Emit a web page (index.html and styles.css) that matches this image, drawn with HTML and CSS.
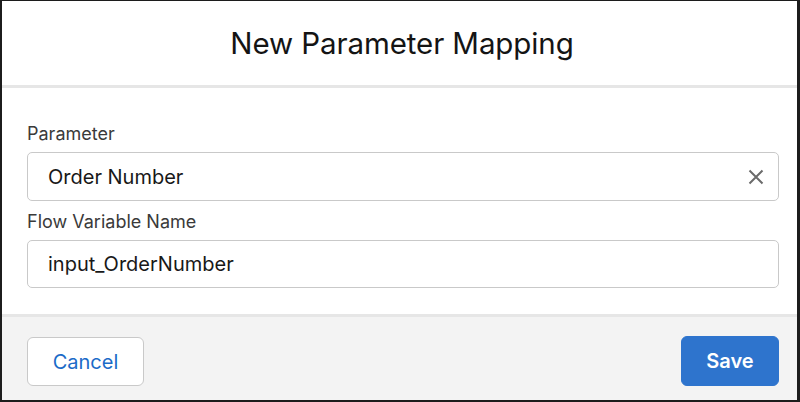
FILE: index.html
```html
<!DOCTYPE html>
<html lang="en">
<head>
    <meta charset="UTF-8">
    <meta name="viewport" content="width=device-width, initial-scale=1.0">
    <title>New Parameter Mapping</title>
    <link rel="stylesheet" href="styles.css">
</head>
<body>
    <div class="modal">
        <header class="modal-header">
            <h1 class="modal-title">New Parameter Mapping</h1>
        </header>

        <div class="modal-body">
            <label class="field-label" for="parameter">Parameter</label>
            <div class="field-input field-input--clearable">
                <span class="field-value">Order Number</span>
                <button class="clear-button" type="button" aria-label="Clear">
                    <svg viewBox="0 0 16 16" width="16" height="16">
                        <path d="M1.5 1.5 L14.5 14.5 M14.5 1.5 L1.5 14.5" stroke="#6b6b6b" stroke-width="2" fill="none"/>
                    </svg>
                </button>
            </div>

            <label class="field-label field-label--spaced" for="flowVar">Flow Variable Name</label>
            <div class="field-input">
                <span class="field-value">input_OrderNumber</span>
            </div>
        </div>

        <footer class="modal-footer">
            <button class="button button--neutral" type="button">Cancel</button>
            <button class="button button--brand" type="button">Save</button>
        </footer>
    </div>
</body>
</html>
```

FILE: styles.css
```css
:root {
    --clr-brand: #2e74cd;
    --clr-link: #1b6bc8;
    --clr-text: #181818;
    --clr-label: #3a3a3a;
    --clr-border: #c9c9c9;
    --clr-divider: #e6e6e6;
    --clr-footer: #f3f3f3;
    --font-family: Inter, 'Noto Sans', sans-serif;
}

* {
    margin: 0;
    padding: 0;
    box-sizing: border-box;
}

html, body {
    width: 800px;
    height: 402px;
    overflow: hidden;
}

body {
    font-family: var(--font-family);
    color: var(--clr-text);
    background: #ffffff;
}

.modal {
    height: 402px;
    display: flex;
    flex-direction: column;
    border-style: solid;
    border-color: #1c1c1c;
    border-width: 1px 3px 2px 2px;
}

.modal-header {
    height: 87px;
    flex-shrink: 0;
    display: flex;
    align-items: center;
    justify-content: center;
    border-bottom: 3px solid var(--clr-divider);
    padding-left: 5px;
}

.modal-title {
    font-size: 29.5px;
    font-weight: 400;
    letter-spacing: -0.1px;
    color: #141414;
}

.modal-body {
    flex: 1;
    display: flex;
    flex-direction: column;
    padding: 34px 18px 0 25px;
}

.field-label {
    font-size: 18px;
    line-height: 24px;
    color: var(--clr-label);
    margin-bottom: 6px;
}

.field-label--spaced {
    margin-top: 9px;
}

.field-input {
    height: 49px;
    display: flex;
    align-items: center;
    border: 1px solid var(--clr-border);
    border-radius: 5px;
    padding: 0 14px 0 20px;
}

.field-input + .field-label + .field-input {
    height: 48px;
}

.field-value {
    flex: 1;
    font-size: 20px;
    color: var(--clr-text);
}

.clear-button {
    display: flex;
    align-items: center;
    background: none;
    border: none;
    cursor: pointer;
}

.modal-footer {
    height: 86px;
    flex-shrink: 0;
    display: flex;
    justify-content: space-between;
    align-items: flex-start;
    padding: 20px 18px 0 25px;
    background: var(--clr-footer);
    border-top: 3px solid var(--clr-divider);
}

.button {
    height: 49px;
    border-radius: 6px;
    font-family: inherit;
    font-size: 20px;
    cursor: pointer;
}

.button--neutral {
    width: 117px;
    background: #ffffff;
    color: var(--clr-link);
    border: 1px solid var(--clr-border);
}

.button--brand {
    width: 98px;
    height: 50px;
    margin-top: -1px;
    background: var(--clr-brand);
    color: #ffffff;
    font-weight: 600;
    border: 1px solid var(--clr-brand);
}
```
